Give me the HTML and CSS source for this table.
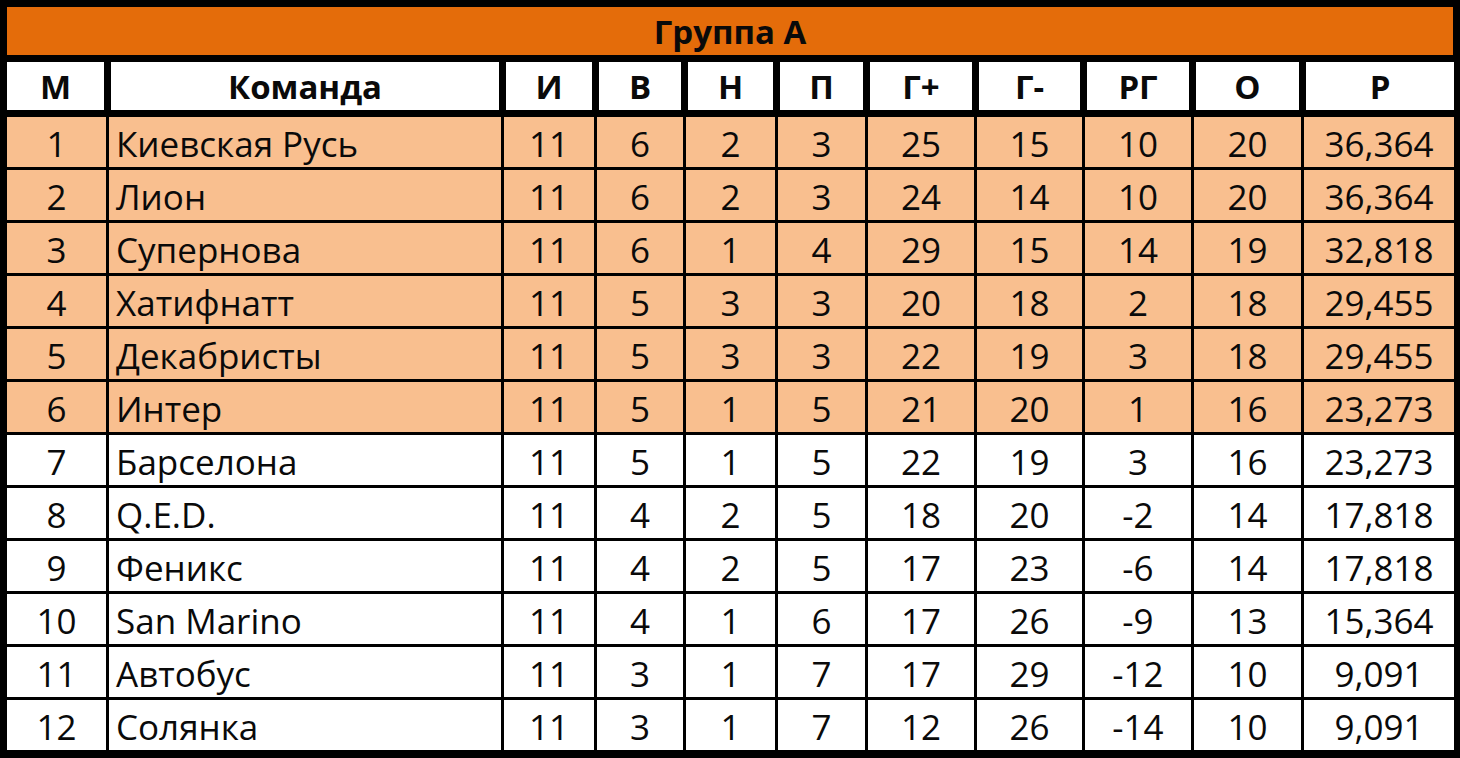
FILE: index.html
```html
<!DOCTYPE html>
<html lang="ru">
<head>
<meta charset="utf-8">
<title>Группа А</title>
<link rel="stylesheet" href="styles.css">
</head>
<body>
<div class="board">
  <div class="title">Группа А</div>
  <div class="grid">
    <div class="h first">М</div><div class="h">Команда</div><div class="h">И</div><div class="h">В</div><div class="h">Н</div><div class="h">П</div><div class="h">Г+</div><div class="h">Г-</div><div class="h">РГ</div><div class="h">О</div><div class="h last">Р</div>

    <div class="c hl">1</div><div class="c hl name">Киевская Русь</div><div class="c hl">11</div><div class="c hl">6</div><div class="c hl">2</div><div class="c hl">3</div><div class="c hl">25</div><div class="c hl">15</div><div class="c hl">10</div><div class="c hl">20</div><div class="c hl">36,364</div>
    <div class="c hl">2</div><div class="c hl name">Лион</div><div class="c hl">11</div><div class="c hl">6</div><div class="c hl">2</div><div class="c hl">3</div><div class="c hl">24</div><div class="c hl">14</div><div class="c hl">10</div><div class="c hl">20</div><div class="c hl">36,364</div>
    <div class="c hl">3</div><div class="c hl name">Супернова</div><div class="c hl">11</div><div class="c hl">6</div><div class="c hl">1</div><div class="c hl">4</div><div class="c hl">29</div><div class="c hl">15</div><div class="c hl">14</div><div class="c hl">19</div><div class="c hl">32,818</div>
    <div class="c hl">4</div><div class="c hl name">Хатифнатт</div><div class="c hl">11</div><div class="c hl">5</div><div class="c hl">3</div><div class="c hl">3</div><div class="c hl">20</div><div class="c hl">18</div><div class="c hl">2</div><div class="c hl">18</div><div class="c hl">29,455</div>
    <div class="c hl">5</div><div class="c hl name">Декабристы</div><div class="c hl">11</div><div class="c hl">5</div><div class="c hl">3</div><div class="c hl">3</div><div class="c hl">22</div><div class="c hl">19</div><div class="c hl">3</div><div class="c hl">18</div><div class="c hl">29,455</div>
    <div class="c hl">6</div><div class="c hl name">Интер</div><div class="c hl">11</div><div class="c hl">5</div><div class="c hl">1</div><div class="c hl">5</div><div class="c hl">21</div><div class="c hl">20</div><div class="c hl">1</div><div class="c hl">16</div><div class="c hl">23,273</div>

    <div class="c">7</div><div class="c name">Барселона</div><div class="c">11</div><div class="c">5</div><div class="c">1</div><div class="c">5</div><div class="c">22</div><div class="c">19</div><div class="c">3</div><div class="c">16</div><div class="c">23,273</div>
    <div class="c">8</div><div class="c name">Q.E.D.</div><div class="c">11</div><div class="c">4</div><div class="c">2</div><div class="c">5</div><div class="c">18</div><div class="c">20</div><div class="c">-2</div><div class="c">14</div><div class="c">17,818</div>
    <div class="c">9</div><div class="c name">Феникс</div><div class="c">11</div><div class="c">4</div><div class="c">2</div><div class="c">5</div><div class="c">17</div><div class="c">23</div><div class="c">-6</div><div class="c">14</div><div class="c">17,818</div>
    <div class="c">10</div><div class="c name">San Marino</div><div class="c">11</div><div class="c">4</div><div class="c">1</div><div class="c">6</div><div class="c">17</div><div class="c">26</div><div class="c">-9</div><div class="c">13</div><div class="c">15,364</div>
    <div class="c">11</div><div class="c name">Автобус</div><div class="c">11</div><div class="c">3</div><div class="c">1</div><div class="c">7</div><div class="c">17</div><div class="c">29</div><div class="c">-12</div><div class="c">10</div><div class="c">9,091</div>
    <div class="c">12</div><div class="c name">Солянка</div><div class="c">11</div><div class="c">3</div><div class="c">1</div><div class="c">7</div><div class="c">12</div><div class="c">26</div><div class="c">-14</div><div class="c">10</div><div class="c">9,091</div>
  </div>
</div>
</body>
</html>
```

FILE: styles.css
```css
html, body {
  margin: 0;
  padding: 0;
  background: #000;
}

.board {
  box-sizing: border-box;
  width: 1460px;
  height: 758px;
  background: #000;
  padding: 7px 7px 8px 7px;
  font-family: "Open Sans", "Noto Sans", "Liberation Sans", sans-serif;
  color: #0a0a0a;
}

.title {
  height: 48px;
  background: #e46c0a;
  display: flex;
  align-items: center;
  justify-content: center;
  font-weight: 700;
  font-size: 33px;
  margin-bottom: 7px;
}

.grid {
  display: grid;
  grid-template-columns: 99px 392px 90px 86px 89px 87px 106px 105px 106px 107px 150px;
  grid-template-rows: 52px repeat(12, 50px);
  gap: 3px;
}

.h {
  box-sizing: border-box;
  background: #fff;
  border-left: 2px solid #000;
  border-right: 2px solid #000;
  border-bottom: 4px solid #000;
  display: flex;
  align-items: center;
  justify-content: center;
  font-weight: 700;
  font-size: 33px;
}

.h.first { border-left: 0; }
.h.last { border-right: 0; }

.c {
  background: #fff;
  display: flex;
  align-items: center;
  justify-content: center;
  font-size: 35px;
  line-height: 1;
  padding-top: 2px;
  box-sizing: border-box;
}

.c.hl { background: #f9bf8f; }

.c.name {
  justify-content: flex-start;
  padding-left: 7px;
}
```
